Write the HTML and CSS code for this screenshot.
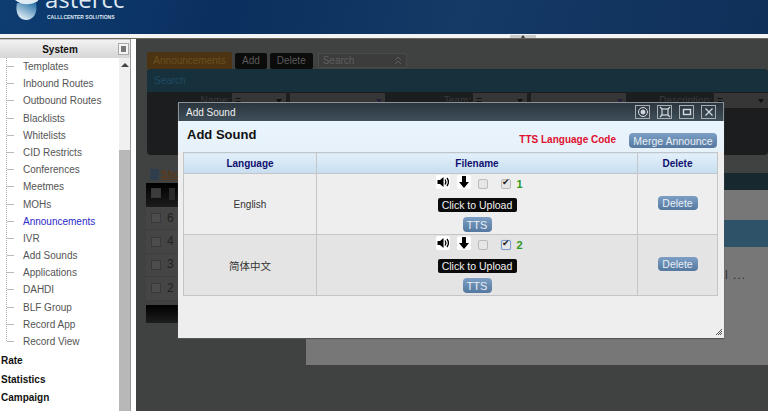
FILE: index.html
```html
<!DOCTYPE html>
<html lang="en">
<head>
  <meta charset="UTF-8">
  <title>astercc - Announcements</title>
  <link rel="stylesheet" href="styles.css">
</head>
<body>
  <div class="top-header">
    <svg class="logo-drop" width="26" height="22" viewBox="0 0 26 22">
      <defs>
        <linearGradient id="dropFill" x1="0.8" y1="0" x2="0.2" y2="1">
          <stop offset="0" stop-color="#2f76aa"/>
          <stop offset="1" stop-color="#f0f7fc"/>
        </linearGradient>
      </defs>
      <path d="M2 3 C0 11 3 20 11 20 C19 20 23 12 21 3 Z" fill="url(#dropFill)"/>
      <path d="M0 0 C6 5 15 6 23 1 L23 -2 L0 -2 Z" fill="#dfeaf3"/>
    </svg>
    <div class="logo-text">
      <div class="logo-name">astercc</div>
      <div class="logo-sub">CALLLCENTER SOLUTIONS</div>
    </div>
  </div>
  <div class="header-gap">
    <div class="split-handle"><i></i></div>
  </div>

  <div class="layout">
    <div class="sidebar">
      <div class="side-title">
        <span>System</span>
        <span class="pin"></span>
      </div>
      <div class="side-body">
        <div class="side-scroll">
          <ul class="tree">
            <li>Templates</li>
            <li>Inbound Routes</li>
            <li>Outbound Routes</li>
            <li>Blacklists</li>
            <li>Whitelists</li>
            <li>CID Restricts</li>
            <li>Conferences</li>
            <li>Meetmes</li>
            <li>MOHs</li>
            <li class="active">Announcements</li>
            <li>IVR</li>
            <li>Add Sounds</li>
            <li>Applications</li>
            <li>DAHDI</li>
            <li>BLF Group</li>
            <li>Record App</li>
            <li>Record View</li>
          </ul>
          <div class="side-group">Rate</div>
          <div class="side-group">Statistics</div>
          <div class="side-group">Campaign</div>
        </div>
        <div class="scrollbar">
          <div class="scroll-up"></div>
          <div class="scroll-thumb"></div>
        </div>
      </div>
    </div>

    <div class="main">
      <div class="toolbar">
        <span class="tab">Announcements</span>
        <span class="tool-btn">Add</span>
        <span class="tool-btn">Delete</span>
        <span class="tool-search">Search
          <svg width="8" height="9" viewBox="0 0 8 9" fill="none" stroke="#5e5e5e"><path d="M1 4l3-3 3 3M1 8l3-3 3 3"/></svg>
        </span>
      </div>
      <div class="search-panel">
        <div class="search-head">Search</div>
        <div class="search-fields">
          <span class="f-label f-name">Name:</span>
          <span class="f-select">=<i></i></span>
          <span class="f-input"><i></i></span>
          <span class="f-label f-team">Team:</span>
          <span class="f-select">=<i></i></span>
          <span class="f-input"><i></i></span>
          <span class="f-label f-desc">Description:</span>
          <span class="f-select">=<i></i></span>
        </div>
      </div>
      <div class="show-link"><span class="show-icon"></span>Show</div>
      <div class="list">
        <div class="list-head"><span class="box"></span><span class="head-cell"></span></div>
        <div class="list-row"><span class="box"></span>6</div>
        <div class="list-row"><span class="box"></span>4</div>
        <div class="list-row"><span class="box"></span>3</div>
        <div class="list-row"><span class="box"></span>2</div>
        <div class="list-foot"></div>
      </div>

      <div class="detail">
        <div class="detail-head"></div>
        <div class="detail-row"></div>
        <div class="detail-row selected"></div>
        <div class="detail-row last">l ...</div>
      </div>
    </div>
  </div>

  <div class="modal">
    <div class="modal-title">
      <span>Add Sound</span>
      <div class="win-btns">
        <span class="win-btn">
          <svg width="12" height="12" viewBox="0 0 12 12" fill="none" stroke="#d5dade"><circle cx="6" cy="6" r="4.5"/><circle cx="6" cy="6" r="2" fill="#d5dade"/></svg>
        </span>
        <span class="win-btn">
          <svg width="12" height="12" viewBox="0 0 12 12" fill="none" stroke="#d5dade" stroke-width="1.2"><rect x="3" y="3" width="6" height="6"/><path d="M1 1l2 2M11 1L9 3M1 11l2-2M11 11L9 9"/></svg>
        </span>
        <span class="win-btn">
          <svg width="12" height="12" viewBox="0 0 12 12" fill="none" stroke="#d5dade" stroke-width="1.4"><rect x="2.500" y="3.500" width="7" height="5"/></svg>
        </span>
        <span class="win-btn">
          <svg width="12" height="12" viewBox="0 0 12 12" fill="none" stroke="#d5dade" stroke-width="1.2"><path d="M2.500 2.500l7 7M9.500 2.500l-7 7"/></svg>
        </span>
      </div>
    </div>
    <div class="modal-top">
      <h2>Add Sound</h2>
      <span class="tts-code">TTS Language Code</span>
      <button class="blue-btn merge">Merge Announce</button>
    </div>
    <table class="sound-table">
      <thead>
        <tr>
          <th class="col-lang">Language</th>
          <th>Filename</th>
          <th class="col-del">Delete</th>
        </tr>
      </thead>
      <tbody>
        <tr>
          <td>English</td>
          <td class="file-cell">
            <div class="file-tools">
              <span class="icon-box">
                <svg width="14" height="14" viewBox="0 0 14 14"><path d="M1.500 5h2.500l3.500-3v10L4 9H1.500z" fill="#000"/><path d="M9 4.500c1 1.500 1 3.500 0 5M11 3c1.800 2.500 1.800 5.500 0 8" fill="none" stroke="#000" stroke-width="1.300"/></svg>
              </span>
              <span class="icon-box">
                <svg width="14" height="14" viewBox="0 0 14 14"><path d="M5 1h4v6h3l-5 6-5-6h3z" fill="#000"/></svg>
              </span>
              <input type="checkbox" class="chk chk-a">
              <input type="checkbox" class="chk chk-b" checked>
              <span class="file-num">1</span>
            </div>
            <div class="upload">Click to Upload</div>
            <button class="blue-btn tts">TTS</button>
          </td>
          <td><button class="blue-btn del">Delete</button></td>
        </tr>
        <tr class="even">
          <td class="cjk">简体中文</td>
          <td class="file-cell">
            <div class="file-tools">
              <span class="icon-box">
                <svg width="14" height="14" viewBox="0 0 14 14"><path d="M1.500 5h2.500l3.500-3v10L4 9H1.500z" fill="#000"/><path d="M9 4.500c1 1.500 1 3.500 0 5M11 3c1.800 2.500 1.800 5.500 0 8" fill="none" stroke="#000" stroke-width="1.300"/></svg>
              </span>
              <span class="icon-box">
                <svg width="14" height="14" viewBox="0 0 14 14"><path d="M5 1h4v6h3l-5 6-5-6h3z" fill="#000"/></svg>
              </span>
              <input type="checkbox" class="chk chk-a">
              <input type="checkbox" class="chk chk-b focus" checked>
              <span class="file-num">2</span>
            </div>
            <div class="upload">Click to Upload</div>
            <button class="blue-btn tts">TTS</button>
          </td>
          <td><button class="blue-btn del">Delete</button></td>
        </tr>
      </tbody>
    </table>
    <svg class="resize-grip" width="8" height="8" viewBox="0 0 8 8" fill="none" stroke="#555"><path d="M7 1L1 7M7 3L3 7M7 5L5 7"/></svg>
  </div>
</body>
</html>
```

FILE: styles.css
```css
* {
  box-sizing: border-box;
  margin: 0;
  padding: 0;
}

body {
  width: 768px;
  height: 411px;
  overflow: hidden;
  position: relative;
  background: white;
  font-family: 'Liberation Sans', Arial, sans-serif;
  font-size: 10px;
}

/* header */
.top-header {
  height: 34px;
  padding-left: 15px;
  display: flex;
  overflow: hidden;
  background: linear-gradient(100deg, #0e3d72 0%, #0b2f5e 30%, #143a66 60%, #0f3059 100%);
}

.logo-drop {
  flex: none;
}

.logo-text {
  margin-left: 4px;
  margin-top: -16px;
  color: #dfe9f2;
}

.logo-name {
  font-family: 'Open Sans', sans-serif;
  font-size: 24px;
  line-height: 30px;
  height: 30px;
}

.logo-sub {
  font-size: 5px;
  font-weight: bold;
  margin-left: 2px;
  white-space: nowrap;
}

.header-gap {
  height: 5px;
  position: relative;
  background: #f4f4f4;
  border-bottom: 1px solid #6b675f;
}

.split-handle {
  position: absolute;
  left: 510px;
  top: 1px;
  width: 26px;
  height: 3px;
  background: #ccc;
}

.split-handle i {
  display: block;
  width: 0;
  margin: 0 auto;
  border-left: 2px solid transparent;
  border-right: 2px solid transparent;
  border-bottom: 3px solid #333;
}

.layout {
  display: flex;
  height: 372px;
}

/* sidebar */
.sidebar {
  width: 131px;
  flex: none;
  border-right: 1px solid #999;
  display: flex;
  flex-direction: column;
}

.side-title {
  height: 19px;
  flex: none;
  display: flex;
  align-items: center;
  justify-content: center;
  position: relative;
  padding-right: 10px;
  font-weight: bold;
  color: #111;
  background: linear-gradient(to bottom, #f2f2f2, #d6d6d6);
  border-top: 1px solid #c8c8c8;
}

.pin {
  position: absolute;
  left: 118px;
  top: 3px;
  width: 11px;
  height: 12px;
  background: #f4f4f4;
  border: 1px solid #aaa;
}

.pin::after {
  content: "";
  display: block;
  width: 5px;
  height: 6px;
  margin: 2px auto;
  background: #777;
}

.side-body {
  flex: 1;
  display: flex;
  min-height: 0;
}

.side-scroll {
  flex: 1;
  overflow: hidden;
}

.tree {
  list-style: none;
  margin-left: 6px;
  border-left: 1px dotted #aaa;
  height: 283px;
}

.tree li {
  height: 17.200px;
  line-height: 17.200px;
  padding-left: 16px;
  position: relative;
  color: #555;
  white-space: nowrap;
}

.tree li::before {
  content: "";
  position: absolute;
  left: 0;
  top: 8px;
  width: 7px;
  border-top: 1px solid #bbb;
}

.tree li.active {
  color: #2a2ac8;
}

.side-group {
  height: 18.500px;
  line-height: 18.500px;
  padding-left: 1px;
  font-weight: bold;
  color: #111;
}

.tree + .side-group {
  margin-top: 11px;
}

.scrollbar {
  width: 11px;
  flex: none;
  background: #f0f0f0;
  position: relative;
}

.scroll-up {
  margin: 5px auto 0;
  width: 0;
  border-left: 4px solid transparent;
  border-right: 4px solid transparent;
  border-bottom: 4px solid #444;
}

.scroll-thumb {
  position: absolute;
  top: 92px;
  bottom: 0;
  left: 0;
  right: 0;
  background: #b8b8b8;
}

/* main, already dimmed by the modal mask */
.main {
  flex: 1;
  margin-left: 5px;
  position: relative;
  background: #404141;
  overflow: hidden;
  padding-top: 13px;
}

.toolbar {
  display: flex;
  align-items: center;
  gap: 3px;
  height: 17px;
  padding-left: 11px;
  color: #5c5c5c;
}

.tab {
  width: 85px;
  height: 17px;
  line-height: 17px;
  text-align: center;
  border-radius: 3px 3px 0 0;
  background: #4c3412;
  color: #6a5020;
}

.tool-btn {
  padding: 0 7px;
  height: 16px;
  line-height: 16px;
  border-radius: 2px;
  background: #0c0c0c;
  color: #5a5a5a;
}

.tool-btn + .tool-btn {
  margin-right: 2px;
}

.tool-search {
  width: 89px;
  height: 15px;
  padding: 0 4px;
  display: flex;
  align-items: center;
  justify-content: space-between;
  border: 1px solid #4a4a4a;
  background: #3c3c3c;
  color: #5e5e5e;
}

.search-panel {
  margin-left: 11px;
  height: 86px;
  background: #1b1d1f;
  border-radius: 4px;
  overflow: hidden;
}

.search-head {
  height: 23px;
  line-height: 23px;
  padding-left: 7px;
  background: #16303c;
  color: #1f4a60;
}

.search-fields {
  display: flex;
  align-items: flex-start;
  padding-top: 1px;
  color: #3a3a3a;
}

.f-label {
  height: 15px;
  line-height: 15px;
  text-align: right;
  margin-right: 2px;
}

.f-name {
  width: 83px;
}

.f-team {
  width: 86px;
}

.f-desc {
  width: 86px;
}

.f-select {
  width: 54px;
  height: 15px;
  line-height: 15px;
  padding-left: 3px;
  background: #363636;
  color: #111;
  position: relative;
  flex: none;
}

.f-select i {
  position: absolute;
  right: 4px;
  top: 6px;
  border-left: 3px solid transparent;
  border-right: 3px solid transparent;
  border-top: 4px solid #111;
}

.f-input {
  width: 95px;
  height: 15px;
  margin-left: 4px;
  background: #363636;
  position: relative;
  flex: none;
}

.f-input i {
  position: absolute;
  right: 3px;
  top: 6px;
  border-left: 3px solid transparent;
  border-right: 3px solid transparent;
  border-top: 4px solid #20203a;
}

.show-link {
  margin: 12px 0 0 14px;
  height: 15px;
  line-height: 15px;
  display: flex;
  align-items: center;
  gap: 2px;
  font-weight: bold;
  color: #5c3a1a;
  text-decoration: underline;
}

.show-icon {
  width: 9px;
  height: 11px;
  background: #2e3e4c;
}

.list {
  margin: 1px 0 0 10px;
  width: 180px;
}

.list-head {
  height: 24px;
  display: flex;
  background: linear-gradient(to bottom, #000, #1c1c1c);
  padding: 5px 0 0 5px;
  gap: 8px;
}

.list-head .box {
  background: #3c3c3c;
}

.head-cell {
  width: 6px;
  height: 12px;
  background: #2a2a2a;
}

.list-row {
  height: 23.400px;
  line-height: 23.400px;
  display: flex;
  align-items: center;
  gap: 6px;
  padding-left: 5px;
  background: #454545;
  border-bottom: 1px solid #3e3e3e;
  color: #222;
  font-size: 12px;
}

.box {
  width: 10px;
  height: 10px;
  background: #4c4c4c;
  border: 1px solid #383838;
  flex: none;
}

.list-foot {
  margin-top: 4px;
  height: 18px;
  background: linear-gradient(to bottom, #000, #1e1e1e);
}

.detail {
  position: absolute;
  left: 170px;
  right: 0;
  top: 134px;
  height: 192px;
  display: flex;
  flex-direction: column;
}

.detail-head {
  height: 17px;
  background: #18282f;
}

.detail-row {
  height: 30px;
  background: #777;
}

.detail-row.selected {
  height: 27px;
  background: #2e5268;
}

.detail-row.last {
  flex: 1;
  padding: 21px 0 0 419px;
  color: #333;
  font-size: 12px;
  letter-spacing: 1px;
}

/* modal */
.modal {
  position: absolute;
  left: 178px;
  top: 102px;
  width: 546px;
  height: 236px;
  background: #eeeeee;
  box-shadow: 0 1px 1px #555;
}

.modal-title {
  height: 19px;
  padding: 0 7px;
  display: flex;
  align-items: center;
  justify-content: space-between;
  border: 1px solid #8a9298;
  border-bottom: 0;
  background: linear-gradient(to bottom, #2b353d, #3f4f5a);
  color: #f0f0f0;
}

.win-btns {
  display: flex;
  gap: 7px;
}

.win-btn {
  width: 15px;
  height: 14px;
  border: 1px solid #a8aeb2;
  display: flex;
  align-items: center;
  justify-content: center;
}

.modal-top {
  height: 31px;
  display: flex;
  align-items: flex-start;
  padding: 0 7px 0 9px;
  background: linear-gradient(to bottom, #eaf4fc, #e6f1fa);
}

.modal-top h2 {
  margin-top: 6px;
  font-size: 13px;
  color: #111;
  flex: 1;
}

.tts-code {
  margin: 13px 13px 0 0;
  font-weight: bold;
  color: #e01030;
  white-space: nowrap;
}

.blue-btn {
  border: 0;
  border-radius: 4px;
  background: linear-gradient(to bottom, #7d9fc6, #54789f);
  color: #e8eef4;
  font-family: 'Liberation Sans', Arial, sans-serif;
  font-size: 10.500px;
}

.merge {
  width: 88px;
  height: 15px;
  margin-top: 12px;
}

.sound-table {
  width: 535px;
  margin-left: 5px;
  border-collapse: collapse;
  table-layout: fixed;
}

.sound-table th,
.sound-table td {
  border: 1px solid #c2c6c8;
  text-align: center;
}

.sound-table th {
  height: 21px;
  background: linear-gradient(to bottom, #e3f0fa, #c7deef);
  font-size: 10px;
  color: #101070;
}

.col-lang {
  width: 133px;
}

.col-del {
  width: 80px;
}

.sound-table td {
  height: 61px;
  background: #eeeeee;
  color: #333;
  vertical-align: middle;
}

.sound-table .even td {
  background: #e4e4e4;
}

.sound-table td.file-cell {
  vertical-align: top;
  padding-top: 1px;
}

.sound-table td.cjk {
  font-family: 'Liberation Sans', 'Noto Sans CJK SC', sans-serif;
  font-size: 10.500px;
}

.file-tools {
  display: flex;
  align-items: flex-start;
  justify-content: center;
  height: 14px;
  margin-bottom: 9px;
  padding-left: 4px;
}

.icon-box {
  width: 14px;
  height: 14px;
  background: white;
  border-radius: 2px;
  display: flex;
  margin-right: 7px;
}

.chk {
  appearance: none;
  width: 10px;
  height: 10px;
  border: 1px solid #bbb;
  border-radius: 2px;
  background: #e6e6e6;
  position: relative;
  margin-top: 4px;
}

.chk-a {
  margin-right: 13px;
}

.chk-b {
  margin-right: 6px;
}

.chk:checked::after {
  content: "\2714";
  position: absolute;
  left: 0;
  top: -3px;
  font-size: 9px;
  color: #222;
}

.chk.focus {
  border-color: #7d9fd0;
  box-shadow: 0 0 1px #7d9fd0;
}

.file-num {
  width: 6px;
  font-weight: bold;
  color: #2e9a1e;
  font-size: 11px;
  padding-top: 3px;
}

.upload {
  width: 79px;
  height: 14px;
  line-height: 14px;
  margin: 0 auto 5px;
  border-radius: 2px;
  background: #0a0a0a;
  color: #f0f0f0;
  font-size: 10.500px;
  white-space: nowrap;
}

.tts {
  display: block;
  width: 29px;
  height: 15px;
  margin: 0 auto;
  font-size: 11px;
}

.del {
  width: 40px;
  height: 14px;
  margin-bottom: 2px;
}

.resize-grip {
  position: absolute;
  right: 1px;
  bottom: 2px;
}
```
